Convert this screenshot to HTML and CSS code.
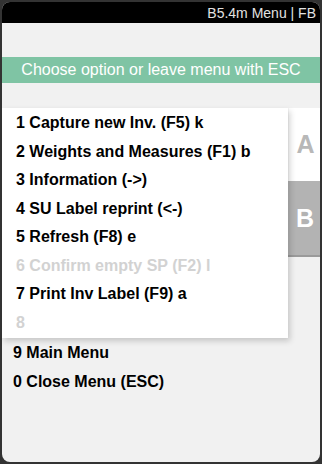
FILE: index.html
```html
<!DOCTYPE html>
<html lang="en">
<head>
    <meta charset="UTF-8">
    <meta name="viewport" content="width=device-width, initial-scale=1.0">
    <title>B5.4m Menu</title>
    <link rel="stylesheet" href="styles.css">
</head>
<body>
    <div class="screen">
        <div class="top-bar">B5.4m Menu | FB</div>
        <div class="banner">Choose option or leave menu with ESC</div>

        <div class="menu-wrap">
            <div class="menu-panel">
                <div class="menu-item">1 Capture new Inv. (F5) k</div>
                <div class="menu-item">2 Weights and Measures (F1) b</div>
                <div class="menu-item">3 Information (-&gt;)</div>
                <div class="menu-item">4 SU Label reprint (&lt;-)</div>
                <div class="menu-item">5 Refresh (F8) e</div>
                <div class="menu-item disabled">6 Confirm empty SP (F2) l</div>
                <div class="menu-item">7 Print Inv Label (F9) a</div>
                <div class="menu-item disabled">8</div>
            </div>
            <div class="tabs">
                <div class="tab tab-a">A</div>
                <div class="tab tab-b">B</div>
            </div>
        </div>

        <div class="bottom-items">
            <div class="menu-item">9 Main Menu</div>
            <div class="menu-item">0 Close Menu (ESC)</div>
        </div>
    </div>
</body>
</html>
```

FILE: styles.css
```css
body {
    margin: 0;
    padding: 2px;
    background-color: #333;
    font-family: "Liberation Sans", Arial, sans-serif;
}
.screen {
    height: 460px;
    background-color: #f1f1f1;
    border-radius: 8px;
    overflow: hidden;
}
.top-bar {
    height: 21px;
    line-height: 22px;
    background-color: black;
    color: #e2e2e2;
    font-size: 14px;
    text-align: right;
    padding-right: 4px;
}
.banner {
    margin-top: 34px;
    height: 26px;
    line-height: 26px;
    background-color: #7fc4a4;
    color: white;
    font-size: 16px;
    text-align: center;
}
.menu-wrap {
    display: flex;
    margin-top: 25px;
}
.menu-panel {
    width: 286px;
    padding: 1px 0;
    background-color: white;
    box-shadow: 2px 3px 6px rgba(0, 0, 0, 0.18);
    position: relative;
    z-index: 1;
}
.menu-item {
    height: 28.5px;
    line-height: 28.5px;
    padding-left: 14px;
    font-size: 16px;
    font-weight: bold;
    color: black;
}
.menu-item.disabled {
    color: #d2d2d2;
}
.tabs {
    width: 32px;
    display: flex;
    flex-direction: column;
}
.tab {
    height: 73px;
    font-size: 25px;
    font-weight: bold;
    display: flex;
    align-items: center;
    justify-content: center;
    padding-left: 2px;
}
.tab-a {
    background-color: white;
    color: #b8b8b8;
    border-left: 1px solid #f6f6f6;
}
.tab-b {
    height: 74px;
    background-color: #b3b3b3;
    color: white;
    border-bottom: 2px solid #9a9a9a;
}
.bottom-items .menu-item {
    height: 29px;
    line-height: 29px;
    padding-left: 11px;
}
```
